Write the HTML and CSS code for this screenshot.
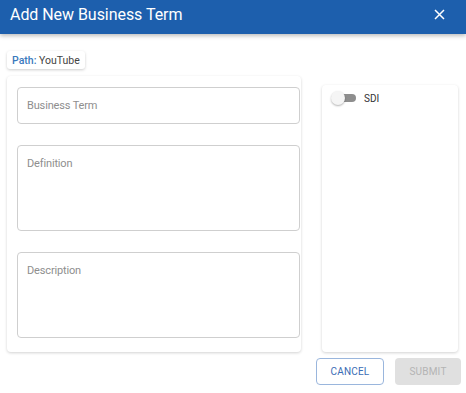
FILE: index.html
```html
<!DOCTYPE html>
<html lang="en">
    <head>
        <meta charset="UTF-8">
        <title>Add New Business Term</title>
        <link rel="stylesheet" href="styles.css">
    </head>
    <body>
        <div class="dialog-header">
            <h1>Add New Business Term</h1>
            <button class="close-btn" aria-label="Close">
                <svg width="11" height="11" viewBox="0 0 11 11">
                    <path d="M1 1 L10 10 M10 1 L1 10" stroke="#fff" stroke-width="1.5" fill="none"/>
                </svg>
            </button>
        </div>

        <div class="dialog-body">
            <div class="path-chip"><span class="path-label">Path:</span>&nbsp;YouTube</div>

            <div class="columns">
                <div class="card form-card">
                    <div class="field field-short"><span class="placeholder">Business Term</span></div>
                    <div class="field field-tall"><span class="placeholder">Definition</span></div>
                    <div class="field field-tall"><span class="placeholder">Description</span></div>
                </div>

                <div class="card side-card">
                    <label class="switch-row">
                        <span class="switch">
                            <span class="switch-track"></span>
                            <span class="switch-thumb"></span>
                        </span>
                        <span class="switch-label">SDI</span>
                    </label>
                </div>
            </div>

            <div class="actions">
                <button class="btn btn-outline">Cancel</button>
                <button class="btn btn-disabled" disabled>Submit</button>
            </div>
        </div>
    </body>
</html>
```

FILE: styles.css
```css
body {
    margin: 0;
    font-family: Roboto, 'Liberation Sans', sans-serif;
    background: #fff;
    color: #333;
    width: 466px;
    height: 393px;
    overflow: hidden;
}
.dialog-header {
    display: flex;
    align-items: center;
    justify-content: space-between;
    height: 34px;
    box-sizing: border-box;
    padding: 0 21px 5px 10px;
    background: #1d5fad;
    color: #fff;
    box-shadow: 0 2px 4px rgba(0,0,0,0.25);
}
.dialog-header h1 {
    margin: 0;
    font-size: 16px;
    font-weight: 400;
    letter-spacing: -0.05px;
}
.close-btn {
    display: flex;
    background: none;
    border: none;
    padding: 0;
    cursor: pointer;
}
.dialog-body {
    padding: 17px 5px 0 7px;
}
.path-chip {
    display: flex;
    align-items: center;
    width: fit-content;
    height: 18px;
    padding: 0 5px;
    font-size: 10.5px;
    color: #444;
    border-radius: 3px;
    box-shadow: 0 1px 3px rgba(0,0,0,0.2);
}
.path-label {
    color: #3a79bd;
    font-weight: 500;
}
.columns {
    display: flex;
    align-items: flex-start;
    gap: 21px;
    margin-top: 7px;
    padding-right: 3px;
}
.card {
    background: #fff;
    border-radius: 4px;
    box-shadow: 0 1px 3px rgba(0,0,0,0.18);
}
.form-card {
    width: 294px;
    box-sizing: border-box;
    padding: 11px 1px 14px 10px;
    display: flex;
    flex-direction: column;
    gap: 21px;
}
.field {
    border: 1px solid #cfcfcf;
    border-radius: 4px;
    padding: 0 9px;
    box-sizing: border-box;
}
.field-short {
    height: 37px;
    display: flex;
    align-items: center;
}
.field-tall {
    height: 86px;
    padding-top: 9px;
    line-height: 14px;
}
.placeholder {
    font-size: 11px;
    letter-spacing: -0.15px;
    color: #8e8e8e;
}
.side-card {
    flex: 1;
    margin-top: 9px;
    height: 267px;
    padding: 6px 9px;
    box-sizing: border-box;
}
.switch-row {
    display: flex;
    align-items: center;
    gap: 7px;
}
.switch {
    position: relative;
    width: 26px;
    height: 14px;
}
.switch-track {
    position: absolute;
    left: 3px;
    top: 3px;
    width: 22px;
    height: 8px;
    border-radius: 4px;
    background: #8e8e8e;
}
.switch-thumb {
    position: absolute;
    left: 0;
    top: 0;
    width: 14px;
    height: 14px;
    border-radius: 50%;
    background: #f5f5f5;
    box-shadow: 0 1px 2px rgba(0,0,0,0.3);
}
.switch-label {
    font-size: 10px;
    color: #333;
}
.actions {
    display: flex;
    justify-content: flex-end;
    gap: 11px;
    margin-top: 6px;
}
.btn {
    height: 27px;
    padding: 0;
    font-family: inherit;
    font-size: 10px;
    font-weight: 400;
    text-transform: uppercase;
    letter-spacing: 0.2px;
    border-radius: 4px;
    cursor: pointer;
}
.btn-outline {
    width: 68px;
    background: #fff;
    color: #3b6db5;
    border: 1px solid #9ab6dd;
}
.btn-disabled {
    width: 66px;
    background: #e0e0e0;
    color: #b4b4b4;
    border: none;
    cursor: default;
}
```
